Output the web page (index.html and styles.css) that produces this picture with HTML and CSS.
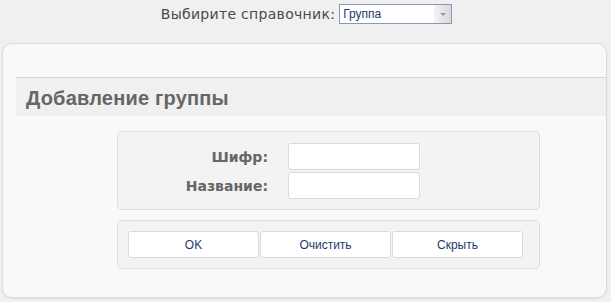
FILE: index.html
```html
<!DOCTYPE html>
<html lang="ru">
<head>
    <meta charset="UTF-8">
    <title>Справочники</title>
    <link rel="stylesheet" href="styles.css">
</head>
<body>
    <div class="dict-bar">
        <span class="dict-label">Выбирите справочник:</span>
        <div class="dict-select">
            <span class="dict-value">Группа</span>
            <span class="dict-arrow"></span>
        </div>
    </div>

    <div class="panel">
        <h2 class="panel-title">Добавление группы</h2>

        <div class="form-box">
            <div class="form-grid">
                <label class="form-label">Шифр:</label>
                <input class="form-input" type="text">
                <label class="form-label">Название:</label>
                <input class="form-input" type="text">
            </div>
        </div>

        <div class="form-box buttons-box">
            <button class="btn">OK</button>
            <button class="btn">Очистить</button>
            <button class="btn">Скрыть</button>
        </div>
    </div>
</body>
</html>
```

FILE: styles.css
```css
* {
    margin: 0;
    padding: 0;
    box-sizing: border-box;
}

body {
    background: #f0f0f0;
    font-family: "DejaVu Sans", sans-serif;
    color: #444;
    width: 611px;
    height: 302px;
    overflow: hidden;
}

.dict-bar {
    display: flex;
    justify-content: center;
    align-items: flex-start;
    gap: 4px;
    padding-top: 4px;
    padding-left: 2px;
    height: 43px;
}

.dict-label {
    font-size: 14px;
    line-height: 20px;
    color: #4a4a4a;
    letter-spacing: 0.3px;
}

.dict-select {
    width: 113px;
    height: 20px;
    border: 1px solid #7f9db9;
    background: #fff;
    display: flex;
    align-items: center;
    justify-content: space-between;
}

.dict-value {
    font-family: "Liberation Sans", sans-serif;
    font-size: 12px;
    color: #1d3a6e;
    padding-left: 3px;
}

.dict-arrow {
    width: 17px;
    height: 18px;
    background: linear-gradient(90deg, #f4f4f4, #d8d8d8);
    position: relative;
}

.dict-arrow::after {
    content: "";
    position: absolute;
    left: 6px;
    top: 8px;
    border-left: 3px solid transparent;
    border-right: 3px solid transparent;
    border-top: 3px solid #999;
}

.panel {
    margin-left: 2px;
    width: 605px;
    height: 255px;
    background: #f9f9f9;
    border: 1px solid #dcdcdc;
    border-radius: 10px;
    padding-top: 33px;
    box-shadow: 0 1px 2px rgba(0, 0, 0, 0.08);
}

.panel-title {
    margin-left: 13px;
    height: 39px;
    background: #f0f0f0;
    border-top: 1px solid #d8d8d8;
    font-family: "Liberation Sans", sans-serif;
    font-size: 20px;
    font-weight: bold;
    color: #666;
    padding-left: 10px;
    line-height: 40px;
    letter-spacing: 0.2px;
}

.form-box {
    margin-left: 114px;
    margin-top: 15px;
    width: 423px;
    background: #f3f3f3;
    border: 1px solid #dddddd;
    border-radius: 5px;
    padding: 11px 0 10px;
}

.form-grid {
    display: grid;
    grid-template-columns: 150px 132px;
    column-gap: 20px;
    row-gap: 2px;
    align-items: center;
}

.form-label {
    text-align: right;
    font-size: 14px;
    font-weight: bold;
    color: #666;
}

.form-input {
    height: 27px;
    border: 1px solid #dadada;
    border-radius: 3px;
    background: #fff;
}

.buttons-box {
    margin-top: 10px;
    padding: 10px 10px;
    display: flex;
    gap: 1px;
}

.btn {
    width: 131px;
    height: 27px;
    background: #fff;
    border: 1px solid #dadada;
    border-radius: 3px;
    font-family: "Liberation Sans", sans-serif;
    font-size: 12px;
    color: #1d3a6e;
}
```
